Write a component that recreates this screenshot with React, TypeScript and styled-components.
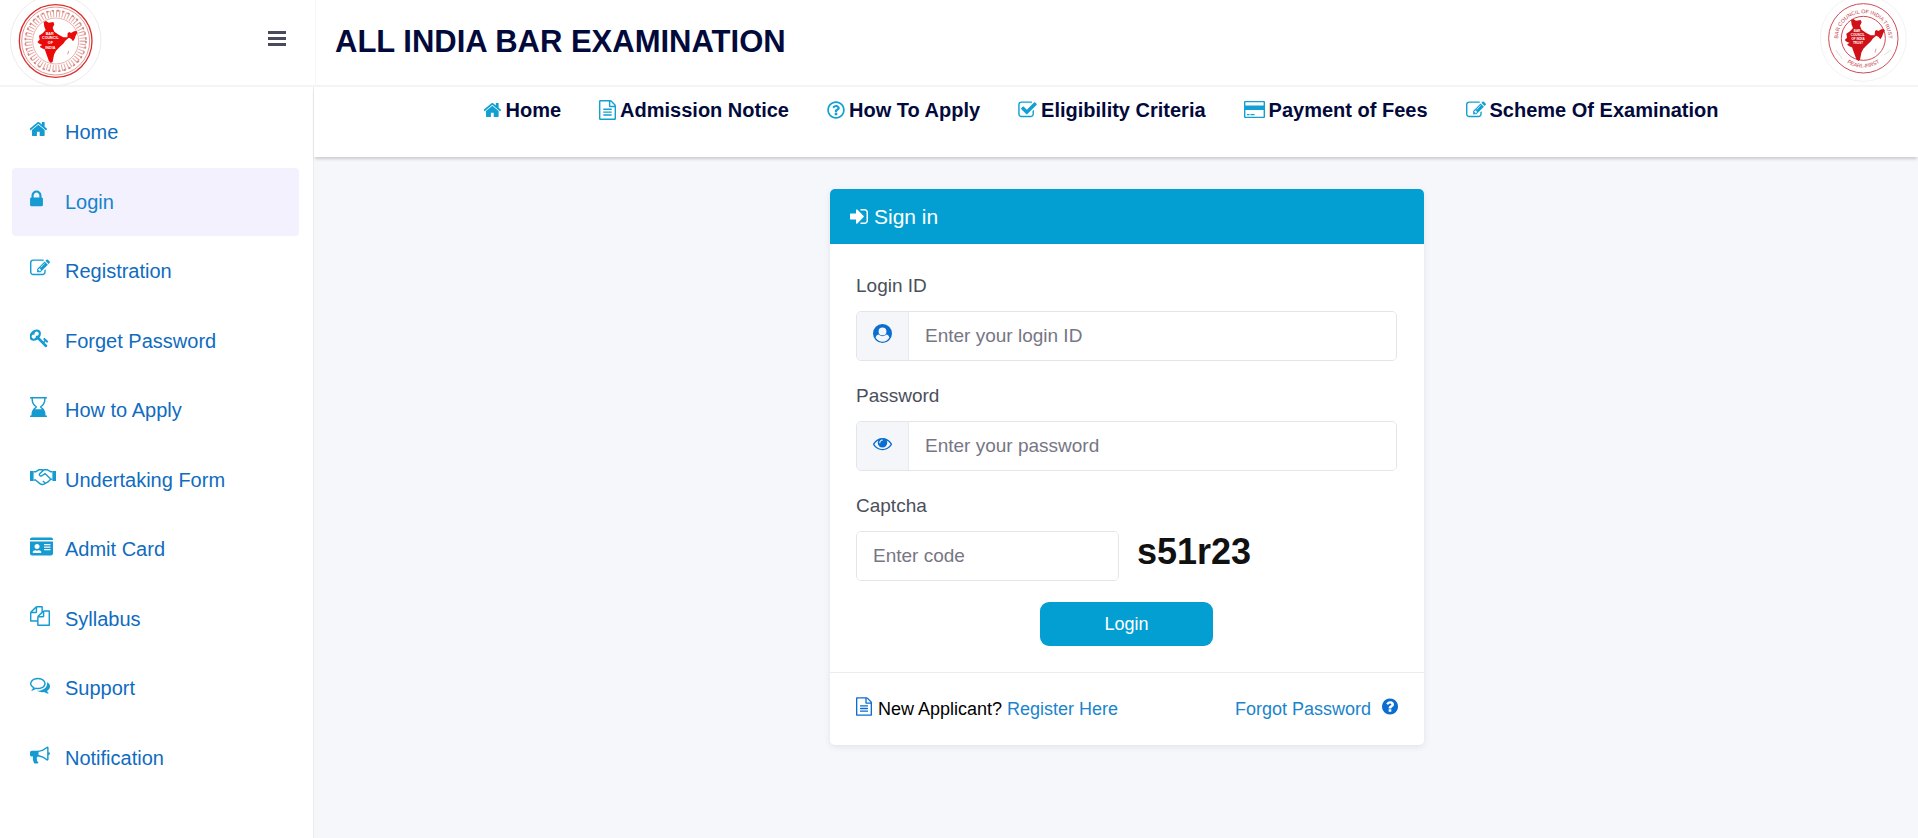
import React from "react";
import styled, { createGlobalStyle } from "styled-components";
import { FaIdCard, FaRegQuestionCircle } from "react-icons/fa";

const GlobalStyle = createGlobalStyle`
  * { box-sizing: border-box; }
  body {
    margin: 0;
    font-family: "Liberation Sans", Arial, sans-serif;
    background: #f6f7fb;
    color: #000;
  }
  a { text-decoration: none; }
`;

/* Glyphs on a 1792-unit em, each with its own left edge and width */
const glyphs = {
  home: {
    x: 75, w: 1640,
    d: "M1408 992v480q0 26-19 45t-45 19h-384v-384h-256v384h-384q-26 0-45-19t-19-45v-480q0-1 .5-3t.5-3l575-474 575 474q1 2 1 6zm223-69l-62 74q-8 9-21 11h-3q-13 0-21-7l-692-577-692 577q-12 8-24 7-13-2-21-11l-62-74q-8-10-7-23.5t11-21.5l719-599q32-26 76-26t76 26l244 204v-195q0-14 9-23t23-9h192q14 0 23 9t9 23v408l219 182q10 8 11 21.5t-7 23.5z",
  },
  lock: {
    x: 320, w: 1152,
    d: "M640 768h512v-192q0-106-75-181t-181-75-181 75-75 181v192zm832 96v576q0 40-28 68t-68 28h-960q-40 0-68-28t-28-68v-576q0-40 28-68t68-28h32v-192q0-184 132-316t316-132 316 132 132 316v192h32q40 0 68 28t28 68z",
  },
  edit: {
    x: 0, w: 1792,
    d: "M888 1184l116-116-152-152-116 116v56h96v96h56zm440-720q-16-16-33 1l-350 350q-17 17-1 33t33-1l350-350q17-17 1-33zm80 594v190q0 119-84.5 203.5t-203.5 84.5h-832q-119 0-203.5-84.5t-84.5-203.5v-832q0-119 84.5-203.5t203.5-84.5h832q63 0 117 25 15 7 18 23 3 17-9 29l-49 49q-14 14-32 8-23-6-45-6h-832q-66 0-113 47t-47 113v832q0 66 47 113t113 47h832q66 0 113-47t47-113v-126q0-13 9-22l64-64q15-15 35-7t20 29zm-96-738l288 288-672 672h-288v-288zm444 132l-92 92-288-288 92-92q28-28 68-28t68 28l152 152q28 28 28 68t-28 68z",
  },
  key: {
    x: 64, w: 1664,
    d: "M832 512q0-80-56-136t-136-56-136 56-56 136q0 42 19 83-41-19-83-19-80 0-136 56t-56 136 56 136 136 56 136-56 56-136q0-42-19-83 41 19 83 19 80 0 136-56t56-136zm851 704q0 17-49 66t-66 49q-9 0-28.5-16t-36.5-33-38.5-40-24.5-26l-96 96 220 220q28 28 28 68 0 42-39 81t-81 39q-40 0-68-28l-671-671q-176 131-365 131-163 0-265.5-102.5t-102.5-265.5q0-160 95-313t248-248 313-95q163 0 265.5 102.5t102.5 265.5q0 189-131 365l355 355 96-96q-3-3-26-24.5t-40-38.5-33-36.5-16-28.5q0-17 49-66t66-49q13 0 23 10 6 6 46 44.5t82 79.5 86.5 86 73 78 28.5 41z",
  },
  hourglass: {
    x: 128, w: 1536,
    d: "M160 0h1472q32 0 32 32v64q0 32-32 32h-96c0 380-130 640-380 768 250 128 380 388 380 768h96q32 0 32 32v64q0 32-32 32h-1472q-32 0-32-32v-64q0-32 32-32h96c0-380 130-640 380-768-250-128-380-388-380-768h-96q-32 0-32-32v-64q0-32 32-32zM384 128c0 340 120 590 360 700v136c-60 30-120 80-170 140h644c-50-60-110-110-170-140v-136c240-110 360-360 360-700z",
  },
  files: {
    x: 0, w: 1792,
    d: "M1696 384q40 0 68 28t28 68v1216q0 40-28 68t-68 28h-960q-40 0-68-28t-28-68v-288h-544q-40 0-68-28t-28-68v-672q0-40 20-88t48-76l408-408q28-28 76-48t88-20h416q40 0 68 28t28 68v328q68-40 128-40h416zm-544 213l-299 299h299v-299zm-640-384l-299 299h299v-299zm196 647l316-316v-416h-384v416q0 40-28 68t-68 28h-416v640h512v-256q0-40 20-88t48-76zm956 804v-1152h-384v416q0 40-28 68t-68 28h-416v640h896z",
  },
  comments: {
    x: 0, w: 1792,
    d: "M704 384q-153 0-286 52t-211.5 141-78.5 191q0 82 53 158t149 132l97 56-35 84q34-20 62-39l44-31 53 10q78 14 153 14 153 0 286-52t211.5-141 78.5-191-78.5-191-211.5-141-286-52zm0-128q191 0 353.5 68.5t256.5 186.5 94 257-94 257-256.5 186.5-353.5 68.5q-86 0-176-16-124 88-278 128-36 9-86 16h-3q-11 0-20.5-8t-11.5-21q-1-3-1-6.5t.5-6.5 2-6l2.5-5 3.5-5.5 4-5 4.5-5 4-4.5q5-6 23-25t26-29.5 22.5-29 25-38.5 20.5-44q-124-72-195-177t-71-224q0-139 94-257t256.5-186.5 353.5-68.5zm822 1169q10 24 20.5 44t25 38.5 22.5 29 26 29.5 23 25q1 1 4 4.5t4.5 5 4 5 3.5 5.5l2.5 5 2 6 .5 6.5-1 6.5q-3 14-13 22t-22 7q-50-7-86-16-154-40-278-128-90 16-176 16-271 0-472-132 58 4 88 4 161 0 309-45t264-129q125-92 192-212t67-254q0-77-23-152 129 71 204 178t75 230q0 120-71 224.5t-195 176.5z",
  },
  bullhorn: {
    x: 0, w: 1792,
    d: "M1664 640q53 0 90.5 37.5t37.5 90.5-37.5 90.5-90.5 37.5v384q0 52-38 90t-90 38q-417-347-812-380-58 19-91 66t-31 100.5 40 92.5q-20 33-23 65.5t6 58 33.5 55 48 50 61.5 50.5q-29 58-111.5 83t-168.5 11.5-132-55.5q-7-23-29.5-87.5t-32-94.5-23-89-15-101 3.5-98.5 22-110.5h-122q-66 0-113-47t-47-113v-192q0-66 47-113t113-47h480q435 0 896-384 52 0 90 38t38 90v384zm-128 604v-954q-394 302-768 343v270q377 42 768 341z",
  },
  signIn: {
    x: 128, w: 1536,
    d: "M1312 896q0 26-19 45l-544 544q-19 19-45 19t-45-19-19-45v-288h-448q-26 0-45-19t-19-45v-384q0-26 19-45t45-19h448v-288q0-26 19-45t45-19 45 19l544 544q19 19 19 45zm352-352v704q0 119-84.5 203.5t-203.5 84.5h-320q-13 0-22.5-9.5t-9.5-22.5q0-4-1-20t-.5-26.5 3-23.5 10-19.5 20.5-6.5h320q66 0 113-47t47-113v-704q0-66-47-113t-113-47h-312l-11.5-1-11.5-3-8-5.5-7-9-2-13.5q0-4-1-20t-.5-26.5 3-23.5 10-19.5 20.5-6.5h320q119 0 203.5 84.5t84.5 203.5z",
  },
  eye: {
    x: 0, w: 1792,
    d: "M1664 960q-152-236-381-353 61 104 61 225 0 185-131.5 316.5t-316.5 131.5-316.5-131.5-131.5-316.5q0-121 61-225-229 117-381 353 133 205 333.5 326.5t434.5 121.5 434.5-121.5 333.5-326.5zm-720-384q0-20-14-34t-34-14q-125 0-214.5 89.5t-89.5 214.5q0 20 14 34t34 14 34-14 14-34q0-86 61-147t147-61q20 0 34-14t14-34zm848 384q0 34-20 69-140 230-376.5 368.5t-499.5 138.5-499.5-139-376.5-368q-20-35-20-69t20-69q140-229 376.5-368t499.5-139 499.5 139 376.5 368q20 35 20 69z",
  },
  question: {
    x: 128, w: 1536,
    d: "M1024 1376v-192q0-14-9-23t-23-9h-192q-14 0-23 9t-9 23v192q0 14 9 23t23 9h192q14 0 23-9t9-23zm256-672q0-88-55.5-163t-138.5-116-170-41q-243 0-371 213-15 24 8 42l132 100q7 6 19 6 16 0 25-12 53-68 86-92 34-24 86-24 48 0 85.5 26t37.5 59q0 38-20 61t-68 45q-63 28-115.5 86.5t-52.5 125.5v36q0 14 9 23t23 9h192q14 0 23-9t9-23q0-19 21.5-49.5t54.5-49.5q32-18 49-28.5t46-35 44.5-48 28-60.5 12.5-81zm384 192q0 209-103 385.5t-279.5 279.5-385.5 103-385.5-103-279.5-279.5-103-385.5 103-385.5 279.5-279.5 385.5-103 385.5 103 279.5 279.5 103 385.5z",
  },
  file: {
    x: 128, w: 1536,
    d: "M1596 380q28 28 48 76t20 88v1152q0 40-28 68t-68 28h-1344q-40 0-68-28t-28-68v-1600q0-40 28-68t68-28h896q40 0 88 20t76 48zm-444-244v376h376q-10-29-22-41l-313-313q-12-12-41-22zm384 1528v-1024h-416q-40 0-68-28t-28-68v-416h-768v1536h1280zm-1024-864q0-14 9-23t23-9h704q14 0 23 9t9 23v64q0 14-9 23t-23 9h-704q-14 0-23-9t-9-23v-64zm736 224q14 0 23 9t9 23v64q0 14-9 23t-23 9h-704q-14 0-23-9t-9-23v-64q0-14 9-23t23-9h704zm0 256q14 0 23 9t9 23v64q0 14-9 23t-23 9h-704q-14 0-23-9t-9-23v-64q0-14 9-23t23-9h704z",
  },
  check: {
    x: 64, w: 1664,
    d: "M1472 930v318q0 119-84.5 203.5t-203.5 84.5h-832q-119 0-203.5-84.5t-84.5-203.5v-832q0-119 84.5-203.5t203.5-84.5h832q63 0 117 25 15 7 18 23 3 17-9 29l-49 49q-10 10-23 10-3 0-9-2-23-6-45-6h-832q-66 0-113 47t-47 113v832q0 66 47 113t113 47h832q66 0 113-47t47-113v-254q0-13 9-22l64-64q10-10 23-10 6 0 12 3 20 8 20 29zm231-489l-814 814q-24 24-57 24t-57-24l-430-430q-24-24-24-57t24-57l110-110q24-24 57-24t57 24l263 263 647-647q24-24 57-24t57 24l110 110q24 24 24 57t-24 57z",
  },
  user: {
    x: 0, w: 1792,
    d: "M896 0a896 896 0 1 1 0 1792a896 896 0 1 1 0-1792zM896 330a370 370 0 1 0 0 740a370 370 0 1 0 0-740zM520 1000C340 1040 270 1180 250 1300Q500 1670 896 1670T1542 1300C1522 1180 1452 1040 1272 1000Q1100 1160 896 1160T520 1000z",
  },
} as const;

type GlyphName = keyof typeof glyphs;

const Glyph = ({ name, size = 20 }: { name: GlyphName; size?: number }) => {
  const g = glyphs[name];
  return (
    <svg
      aria-hidden="true"
      width={Math.round((size * g.w) / 1792)}
      height={size}
      viewBox={`${g.x} 0 ${g.w} 1792`}
      fill="currentColor"
    >
      <path
        d={g.d}
        fillRule={name === "user" || name === "hourglass" ? "evenodd" : "nonzero"}
      />
    </svg>
  );
};

const Handshake = () => (
  <svg aria-hidden="true" width="26" height="20" viewBox="0 0 26 20" fill="none" stroke="currentColor" strokeWidth="1.4" strokeLinejoin="round">
    <path d="M0 4h3.6v10H0zM22.4 4H26v10h-3.6z" fill="currentColor" stroke="none" />
    <path d="M3.6 4.7H6L9 2.7h3.4l1 .6M22.4 4.7H20.6L17 2.7h-3L9.4 7c-.6 1.6 1.6 2.6 3 1.5L15 6.6l5.4 5.2M3.6 13h2l4.2 3.6c1.6 1.2 3 1.3 4.6.3l3.6-2 2.6-2.6 1.8-.2M15.2 16l-2.4-2" />
  </svg>
);

const CreditCard = () => (
  <svg aria-hidden="true" width="21" height="20" viewBox="0 0 21 20" fill="currentColor">
    <path d="M1 1h19q1 0 1 1v15q0 1-1 1H1q-1 0-1-1V2Q0 1 1 1zm.4 1.3v3.2h18.2V2.300zm0 7.700v6.700h18.200V10zM3 14h2.500v1.300H3zm3.500 0h4v1.300h-4z" fillRule="evenodd" />
  </svg>
);

const MAP =
  "M131 66L138 63L146 68L160 66L163 73L158 83L163 95L176 104L190 112L202 112L203 99L208 96L213 99L222 94L230 93L232 98L227 107L224 116L219 124L214 117L207 113L202 117L196 122L191 130L179 141L168 152L162 164L158 185L153 189L147 184L141 167L134 148L129 146L121 142L120 138L127 135L118 131L112 126L119 119L117 107L128 100L137 90L133 80z";

const Logo = styled.svg`
  display: block;
  flex: none;
`;

const CouncilLogo = () => (
  <Logo width="92" height="86" viewBox="30 0 276 258" role="img" aria-label="Bar Council of India">
    <circle cx="167" cy="121" r="136" fill="#fff" stroke="#ececec" strokeWidth="3" />
    <circle cx="167" cy="123" r="109" fill="none" stroke="#d9302f" strokeWidth="4" />
    <circle cx="167" cy="123" r="102" fill="none" stroke="#e0605c" strokeWidth="2" />
    <circle cx="167" cy="123" r="82" fill="none" stroke="#e9a39e" strokeWidth="20" strokeDasharray="3 6" />
    <circle cx="167" cy="123" r="91" fill="none" stroke="#c98a85" strokeWidth="5" strokeDasharray="7 9" />
    <circle cx="167" cy="123" r="69" fill="#fff" stroke="#d98d88" strokeWidth="2" />
    <path d={MAP} fill="#ea0a0a" />
    <path d="M206 153l-3 10" stroke="#ea5a5a" strokeWidth="2" />
    <g fill="#fff" fontSize="11" fontWeight="700" textAnchor="middle">
      <text x="149" y="105">BAR</text>
      <text x="151" y="118">COUNCIL</text>
      <text x="151" y="132">OF</text>
      <text x="151" y="147">INDIA</text>
    </g>
  </Logo>
);

const TrustLogo = () => (
  <Logo width="87" height="84" viewBox="60 0 261 252" role="img" aria-label="Bar Council of India Trust">
    <defs>
      <path id="trust-top" d="M118 140A76 76 0 1 1 262 140" />
      <path id="trust-bottom" d="M102 115A88 88 0 0 0 278 115" />
    </defs>
    <circle cx="190" cy="115" r="129" fill="#fff" stroke="#ececec" strokeWidth="2" />
    <circle cx="190" cy="115" r="104" fill="none" stroke="#cf4a55" strokeWidth="3" />
    <circle cx="190" cy="115" r="66" fill="none" stroke="#cf4a55" strokeWidth="3" />
    <g fill="#c23a46" fontSize="16" textAnchor="middle">
      <text><textPath href="#trust-top" startOffset="50%">BAR COUNCIL OF INDIA TRUST</textPath></text>
      <text><textPath href="#trust-bottom" startOffset="50%">PEARL-FIRST</textPath></text>
    </g>
    <path d="M107 150l20 26M273 150l-20 14" stroke="#d9c9c9" strokeWidth="2" />
    <path d={MAP} transform="translate(22 -6)" fill="#d01218" />
    <g fill="#fff" fontSize="9" fontWeight="700" textAnchor="middle">
      <text x="171" y="96">BAR</text>
      <text x="173" y="108">COUNCIL</text>
      <text x="174" y="120">OF INDIA</text>
      <text x="174" y="132">TRUST</text>
    </g>
    <path d="M228 146l-3 12" stroke="#d66" strokeWidth="2" />
  </Logo>
);

const Page = styled.div`
  min-height: 100vh;
  display: flex;
  flex-direction: column;
`;

const Header = styled.header`
  display: flex;
  height: 87px;
  background: #fff;
  border-bottom: 2px solid #f4f4f5;
`;

const Brand = styled.div`
  width: 316px;
  flex: none;
  display: flex;
  align-items: flex-start;
  justify-content: space-between;
  padding: 0 29px 0 10px;
  border-right: 1px solid #f7f7f9;
`;

const MenuButton = styled.button`
  margin-top: 31px;
  padding: 0;
  border: 0;
  background: none;
  display: grid;
  gap: 3px;
  cursor: pointer;
`;

const Bar = styled.span`
  width: 18px;
  height: 3px;
  background: #4a4a5c;
`;

const TitleBar = styled.div`
  flex: 1;
  display: flex;
  justify-content: space-between;
  padding: 0 11px 0 19px;
`;

const Title = styled.h1`
  margin: 0;
  font-size: 31px;
  line-height: 84px;
  color: #020a3c;
`;

const Columns = styled.div`
  flex: 1;
  display: flex;
`;

const Sidebar = styled.nav`
  width: 314px;
  flex: none;
  background: #fff;
  border-right: 1px solid #ececee;
  padding: 11px 14px 24px 12px;
`;

const Menu = styled.ul`
  list-style: none;
  margin: 0;
  padding: 0;
  display: grid;
  grid-auto-rows: 1fr;
  gap: 1px;
  min-height: 694px;
`;

const MenuLink = styled.a<{ $active?: boolean }>`
  height: 100%;
  display: flex;
  align-items: center;
  padding-left: 18px;
  border-radius: 4px;
  font-size: 20px;
  line-height: 24px;
  color: ${(p) => (p.$active ? "#1683cb" : "#0f6cc0")};
  background: ${(p) => (p.$active ? "#f2f1fd" : "transparent")};
`;

const MenuIcon = styled.span`
  width: 35px;
  display: flex;
  padding-bottom: 6px;
  color: #149bd2;
`;

const Main = styled.div`
  flex: 1;
  min-width: 0;
`;

const TopNav = styled.nav`
  height: 70px;
  background: #fff;
  box-shadow: 0 3px 3px -1px rgba(0, 0, 0, 0.18);
  display: flex;
  justify-content: center;
  gap: 38px;
  padding: 11px 30px 0 0;
`;

const TopLink = styled.a`
  height: 24px;
  display: flex;
  align-items: center;
  gap: 4px;
  white-space: nowrap;
  font-size: 20px;
  font-weight: 700;
  color: #020a3c;
  svg { color: #12a0d2; }
`;

const Content = styled.main`
  display: flex;
  justify-content: center;
  padding: 32px 0 32px 22px;
`;

const Card = styled.section`
  width: 594px;
  background: #fff;
  border-radius: 5px;
  box-shadow: 0 2px 6px rgba(60, 60, 100, 0.1);
`;

const CardHeader = styled.h2`
  margin: 0;
  height: 55px;
  padding-left: 20px;
  display: flex;
  align-items: center;
  gap: 6px;
  border-radius: 5px 5px 0 0;
  background: #039fd3;
  color: #fff;
  font-size: 21px;
  font-weight: 400;
`;

const Form = styled.form`
  padding: 30px 27px 26px 26px;
  display: flex;
  flex-direction: column;
`;

const Label = styled.label`
  font-size: 19px;
  line-height: 24px;
  margin-bottom: 13px;
  color: #4b4f5a;
`;

const Field = styled.div<{ $narrow?: boolean }>`
  width: ${(p) => (p.$narrow ? "263px" : "100%")};
  height: 50px;
  display: flex;
  border: 1px solid #e4e5e9;
  border-radius: 5px;
  overflow: hidden;
  margin-bottom: ${(p) => (p.$narrow ? "21px" : "23px")};
`;

const Addon = styled.span`
  width: 52px;
  flex: none;
  display: flex;
  justify-content: center;
  align-items: center;
  padding-bottom: 6px;
  background: #f5f6f9;
  border-right: 1px solid #e9eaee;
  color: #0a6dcf;
`;

const Input = styled.input`
  flex: 1;
  min-width: 0;
  border: 0;
  outline: 0;
  padding: 0 16px;
  background: #fff;
  font: 19px "Liberation Sans", Arial, sans-serif;
  color: #333;
  &::placeholder { color: #767684; opacity: 1; }
`;

const CaptchaRow = styled.div`
  display: flex;
  gap: 18px;
`;

const CaptchaCode = styled.span`
  font-size: 36px;
  line-height: 42px;
  font-weight: 700;
  color: #111;
`;

const Submit = styled.button`
  align-self: center;
  width: 173px;
  height: 44px;
  border: 0;
  border-radius: 9px;
  background: #039fd3;
  color: #fff;
  font: 18px "Liberation Sans", Arial, sans-serif;
  cursor: pointer;
`;

const CardFooter = styled.footer`
  border-top: 1px solid #ececf0;
  padding: 24px 26px;
  display: flex;
  justify-content: space-between;
  font-size: 18px;
  line-height: 24px;
`;

const FooterGroup = styled.div<{ $gap: number }>`
  display: flex;
  gap: ${(p) => p.$gap}px;
  svg { color: #0a6dcf; }
`;

const TextLink = styled.a`
  color: #1a84cc;
`;

const menu: { label: string; icon: React.ReactNode; active?: boolean }[] = [
  { label: "Home", icon: <Glyph name="home" /> },
  { label: "Login", icon: <Glyph name="lock" />, active: true },
  { label: "Registration", icon: <Glyph name="edit" /> },
  { label: "Forget Password", icon: <Glyph name="key" /> },
  { label: "How to Apply", icon: <Glyph name="hourglass" /> },
  { label: "Undertaking Form", icon: <Handshake /> },
  { label: "Admit Card", icon: <FaIdCard size={23} /> },
  { label: "Syllabus", icon: <Glyph name="files" /> },
  { label: "Support", icon: <Glyph name="comments" /> },
  { label: "Notification", icon: <Glyph name="bullhorn" /> },
];

const topLinks = [
  { label: "Home", icon: <Glyph name="home" /> },
  { label: "Admission Notice", icon: <Glyph name="file" /> },
  { label: "How To Apply", icon: <FaRegQuestionCircle size={18} /> },
  { label: "Eligibility Criteria", icon: <Glyph name="check" /> },
  { label: "Payment of Fees", icon: <CreditCard /> },
  { label: "Scheme Of Examination", icon: <Glyph name="edit" /> },
];

export default function App() {
  return (
    <Page>
      <GlobalStyle />
      <Header>
        <Brand>
          <CouncilLogo />
          <MenuButton type="button" aria-label="Toggle menu">
            <Bar />
            <Bar />
            <Bar />
          </MenuButton>
        </Brand>
        <TitleBar>
          <Title>ALL INDIA BAR EXAMINATION</Title>
          <TrustLogo />
        </TitleBar>
      </Header>
      <Columns>
        <Sidebar aria-label="Sidebar">
          <Menu>
            {menu.map((m) => (
              <li key={m.label}>
                <MenuLink href="#" $active={m.active}>
                  <MenuIcon>{m.icon}</MenuIcon>
                  {m.label}
                </MenuLink>
              </li>
            ))}
          </Menu>
        </Sidebar>
        <Main>
          <TopNav aria-label="Main">
            {topLinks.map((l) => (
              <TopLink key={l.label} href="#">
                {l.icon}
                {l.label}
              </TopLink>
            ))}
          </TopNav>
          <Content>
            <Card>
              <CardHeader>
                <Glyph name="signIn" size={21} />
                Sign in
              </CardHeader>
              <Form onSubmit={(e) => e.preventDefault()}>
                <Label htmlFor="login-id">Login ID</Label>
                <Field>
                  <Addon><Glyph name="user" size={19} /></Addon>
                  <Input id="login-id" type="text" placeholder="Enter your login ID" />
                </Field>
                <Label htmlFor="password">Password</Label>
                <Field>
                  <Addon><Glyph name="eye" size={19} /></Addon>
                  <Input id="password" type="password" placeholder="Enter your password" />
                </Field>
                <Label htmlFor="captcha">Captcha</Label>
                <CaptchaRow>
                  <Field $narrow>
                    <Input id="captcha" type="text" placeholder="Enter code" />
                  </Field>
                  <CaptchaCode>s51r23</CaptchaCode>
                </CaptchaRow>
                <Submit type="submit">Login</Submit>
              </Form>
              <CardFooter>
                <FooterGroup $gap={6}>
                  <Glyph name="file" size={19} />
                  <span>
                    New Applicant? <TextLink href="#">Register Here</TextLink>
                  </span>
                </FooterGroup>
                <FooterGroup $gap={11}>
                  <TextLink href="#">Forgot Password</TextLink>
                  <Glyph name="question" size={19} />
                </FooterGroup>
              </CardFooter>
            </Card>
          </Content>
        </Main>
      </Columns>
    </Page>
  );
}
